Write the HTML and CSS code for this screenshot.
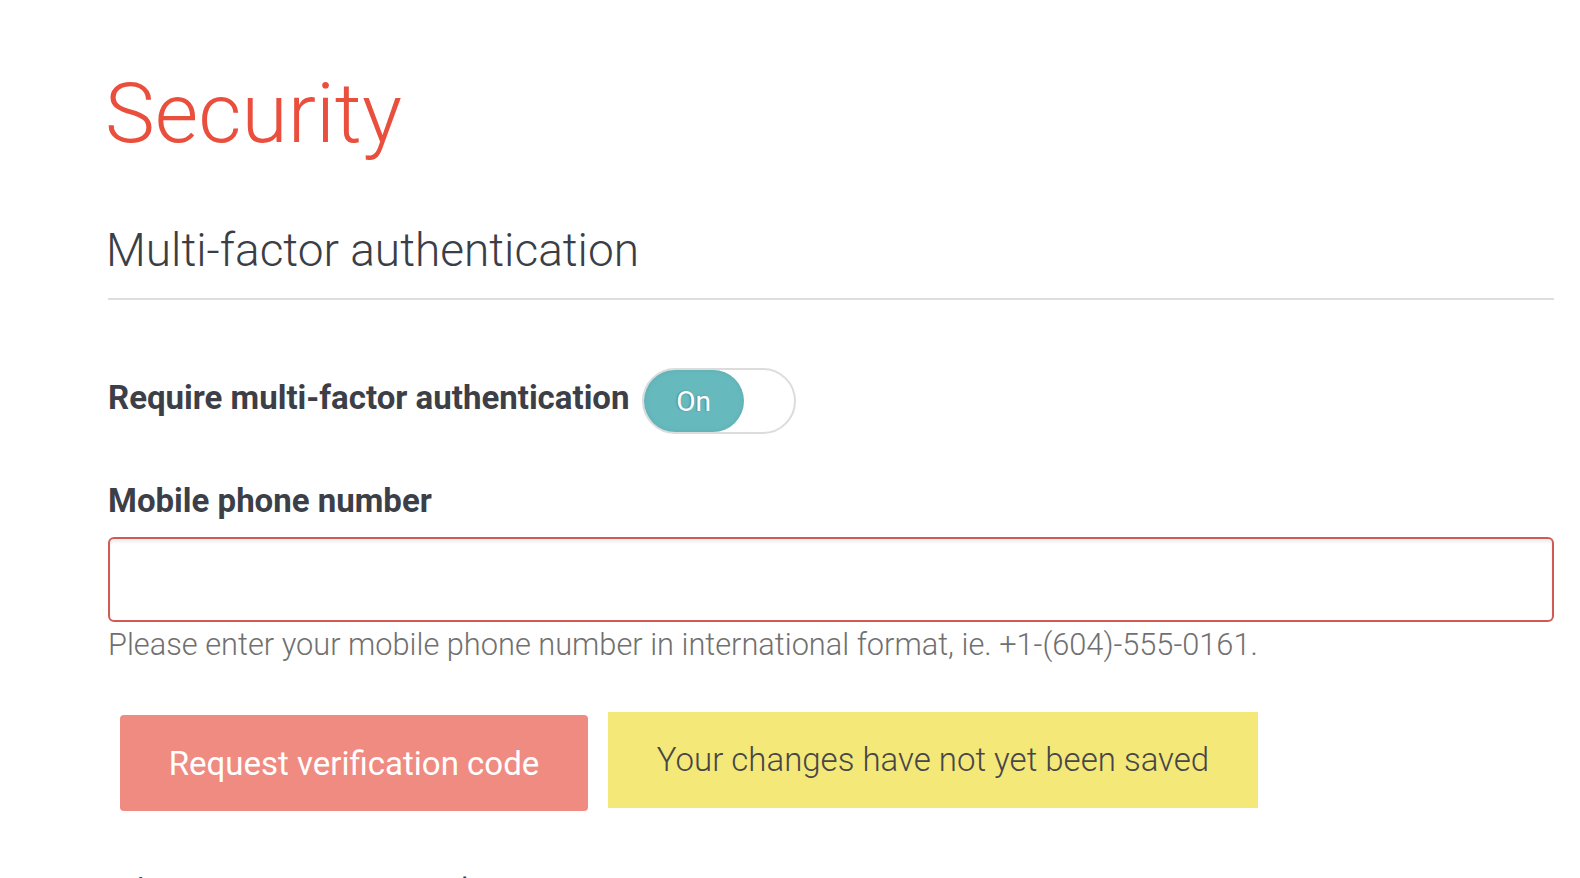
FILE: index.html
```html
<!DOCTYPE html>
<html lang="en">
<head>
<meta charset="utf-8">
<title>Security</title>
<link rel="stylesheet" href="styles.css">
</head>
<body>
<main class="page">
  <h1 class="page-title">Security</h1>
  <section class="section">
    <h2 class="section-title">Multi-factor authentication</h2>
    <div class="toggle-row">
      <span class="field-label toggle-label">Require multi-factor authentication</span>
      <button class="toggle" type="button"><span class="toggle-knob">On</span></button>
    </div>
    <div class="field">
      <label class="field-label" for="phone">Mobile phone number</label>
      <input class="text-input" id="phone" type="text">
      <p class="help">Please enter your mobile phone number in international format, ie. +1-(604)-555-0161.</p>
    </div>
    <div class="actions">
      <button class="btn-primary" type="button">Request verification code</button>
      <div class="notice">Your changes have not yet been saved</div>
    </div>
  </section>
  <section class="section">
    <h2 class="section-title">Change password</h2>
  </section>
</main>
</body>
</html>
```
FILE: styles.css
```css
* { box-sizing: border-box; }
html, body { margin: 0; padding: 0; background: #fff; }
body { font-family: Roboto, "Noto Sans", sans-serif; color: #3c3f47; }
.page { padding: 54px 26px 0 108px; }
.page-title {
  margin: 0 0 0 -3px;
  font-size: 84px;
  font-weight: 300;
  line-height: 120px;
  color: #ea4e3d;
}
.section-title {
  margin: 43px 0 0;
  font-size: 46px;
  font-weight: 300;
  line-height: 66px;
  color: #3b3e46;
  padding-bottom: 15px;
  border-bottom: 2px solid #dedede;
  text-indent: -2px;
}
.toggle-row {
  display: flex;
  align-items: center;
  gap: 12px;
  margin-top: 68px;
}
.field-label {
  display: block;
  font-size: 33px;
  font-weight: 700;
  color: #3c3f47;
}
.toggle-label { padding-bottom: 8px; }
.toggle {
  width: 154px;
  height: 66px;
  border: 2px solid #dcdcdc;
  border-radius: 33px;
  background: #fff;
  padding: 0;
  display: flex;
  align-items: center;
  cursor: pointer;
}
.toggle-knob {
  width: 100px;
  height: 62px;
  border-radius: 31px;
  background: #66babe;
  color: #fff;
  font-family: Roboto, sans-serif;
  font-size: 28px;
  font-weight: 400;
  display: flex;
  align-items: center;
  justify-content: center;
  text-shadow: -1px 0 2px rgba(0,0,0,0.25);
  box-shadow: inset 0 0 6px rgba(0,0,0,0.08);
}
.field { margin-top: 47px; }
.field .field-label { line-height: 40px; }
.text-input {
  display: block;
  width: 100%;
  height: 85px;
  margin-top: 16px;
  border: 2px solid #cf5b55;
  border-radius: 6px;
  box-shadow: inset 0 3px 3px rgba(0,0,0,0.07);
  font-size: 28px;
  outline: none;
}
.help {
  margin: 6px 0 0;
  font-size: 30.75px;
  font-weight: 300;
  color: #707070;
  line-height: 34px;
}
.actions {
  display: flex;
  align-items: center;
  gap: 20px;
  margin-top: 49px;
  padding-left: 12px;
}
.btn-primary {
  width: 468px;
  height: 96px;
  border: none;
  border-radius: 4px;
  background: #f08b81;
  color: #fff;
  font-family: Roboto, sans-serif;
  font-size: 33px;
  font-weight: 400;
  cursor: pointer;
  margin-top: 4px;
}
.notice {
  width: 650px;
  height: 96px;
  background: #f4e878;
  color: #46464a;
  font-size: 33px;
  font-weight: 300;
  display: flex;
  align-items: center;
  justify-content: center;
  margin-bottom: 3px;
}
.section + .section .section-title { margin-top: 52px; }
```
